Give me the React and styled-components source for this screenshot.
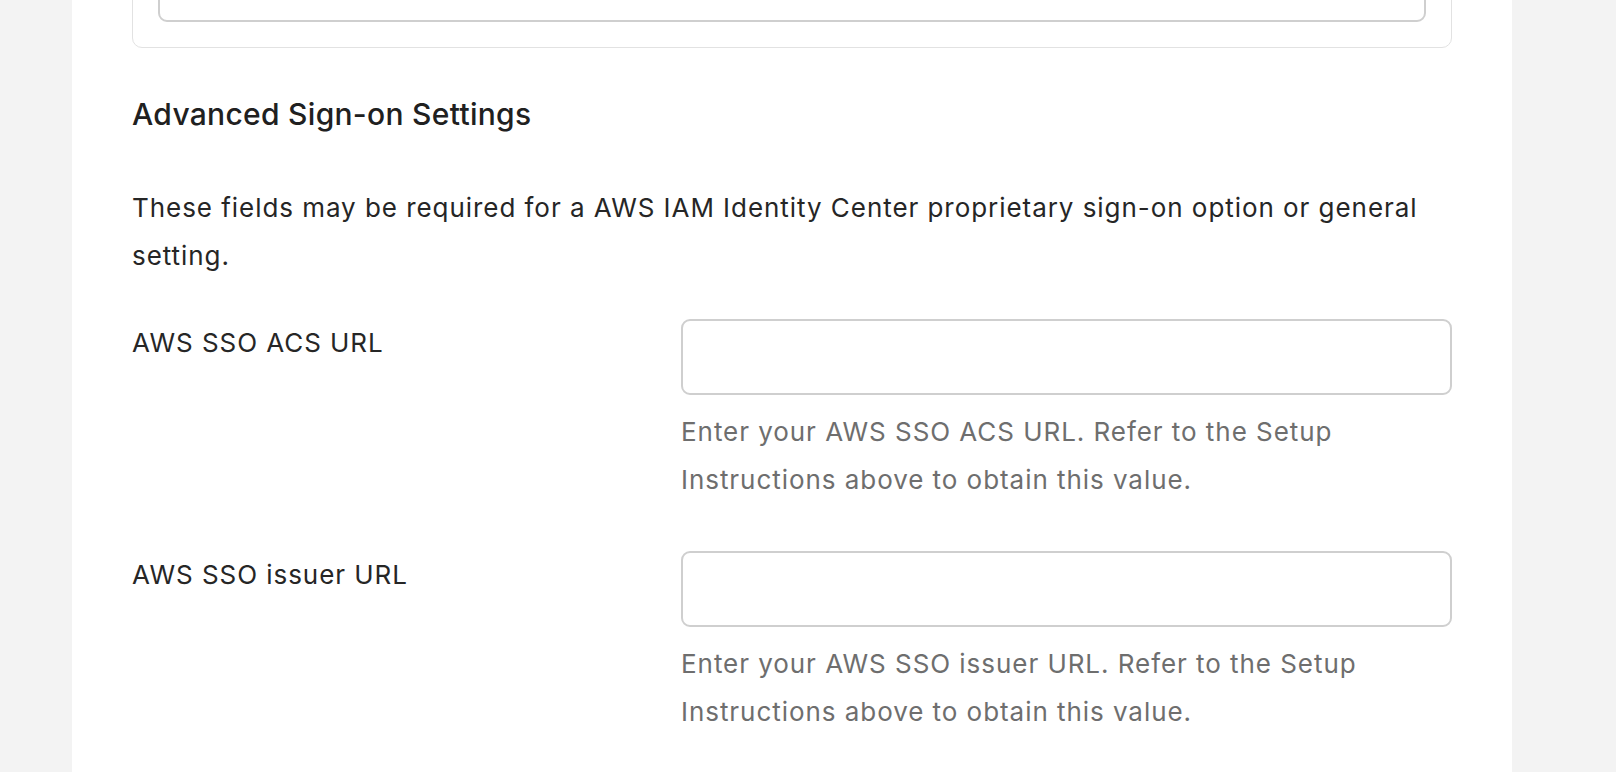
import React from 'react'
import styled, { createGlobalStyle } from 'styled-components'

const GlobalStyle = createGlobalStyle`
  * { box-sizing: border-box; }
  body {
    margin: 0;
    background: #f3f3f3;
    font-family: Inter, "Liberation Sans", sans-serif;
    color: #222;
    overflow: hidden;
  }
`

const Page = styled.div`
  display: flex;
  padding-left: 72px;
  min-height: 100vh;
`

const Panel = styled.main`
  width: 1440px;
  background: #fff;
  padding: 0 60px;
  margin-top: -79px;
  min-height: calc(100vh + 79px);
`

const Card = styled.section`
  border: 1px solid #e2e2e2;
  border-radius: 10px;
  padding: 24px 25px 25px;
  margin-bottom: 48px;
`

const Input = styled.input`
  display: block;
  width: 100%;
  height: 76px;
  border: 2px solid #cfcfcf;
  border-radius: 9px;
  background: #fff;
  padding: 0 20px;
  font: inherit;
  font-size: 26px;
  outline: none;
`

const Heading = styled.h2`
  margin: 0 0 52px;
  font-size: 30px;
  line-height: 36px;
  font-weight: 500;
  letter-spacing: 0.3px;
  color: #202020;
`

const Body = styled.p`
  margin: 0;
  font-size: 26px;
  line-height: 48px;
  letter-spacing: 0.95px;
  color: ${(p) => (p.$muted ? '#6e6e6e' : '#262626')};
`

const Intro = styled(Body)`
  margin-bottom: 39px;
`

const Fields = styled.div`
  display: grid;
  grid-template-columns: 549px 1fr;
  row-gap: 47px;
`

const Label = styled.label`
  font-size: 26px;
  line-height: 48px;
  letter-spacing: 0.95px;
  color: #262626;
`

const Control = styled.div`
  display: flex;
  flex-direction: column;
  gap: 13px;
`

const fields = [
  { id: 'acs', label: 'AWS SSO ACS URL' },
  { id: 'issuer', label: 'AWS SSO issuer URL' },
]

const App = () => {
  return (
    <>
      <GlobalStyle />
      <Page>
        <Panel>
          <Card>
            <Input aria-label="previous field" />
          </Card>
          <Heading>Advanced Sign-on Settings</Heading>
          <Intro>
            These fields may be required for a AWS IAM Identity Center proprietary sign-on option or general setting.
          </Intro>
          <Fields>
            {fields.map((f) => (
              <React.Fragment key={f.id}>
                <Label htmlFor={f.id}>{f.label}</Label>
                <Control>
                  <Input id={f.id} />
                  <Body $muted>
                    Enter your {f.label}. Refer to the Setup Instructions above to obtain this value.
                  </Body>
                </Control>
              </React.Fragment>
            ))}
          </Fields>
        </Panel>
      </Page>
    </>
  )
}

export default App
